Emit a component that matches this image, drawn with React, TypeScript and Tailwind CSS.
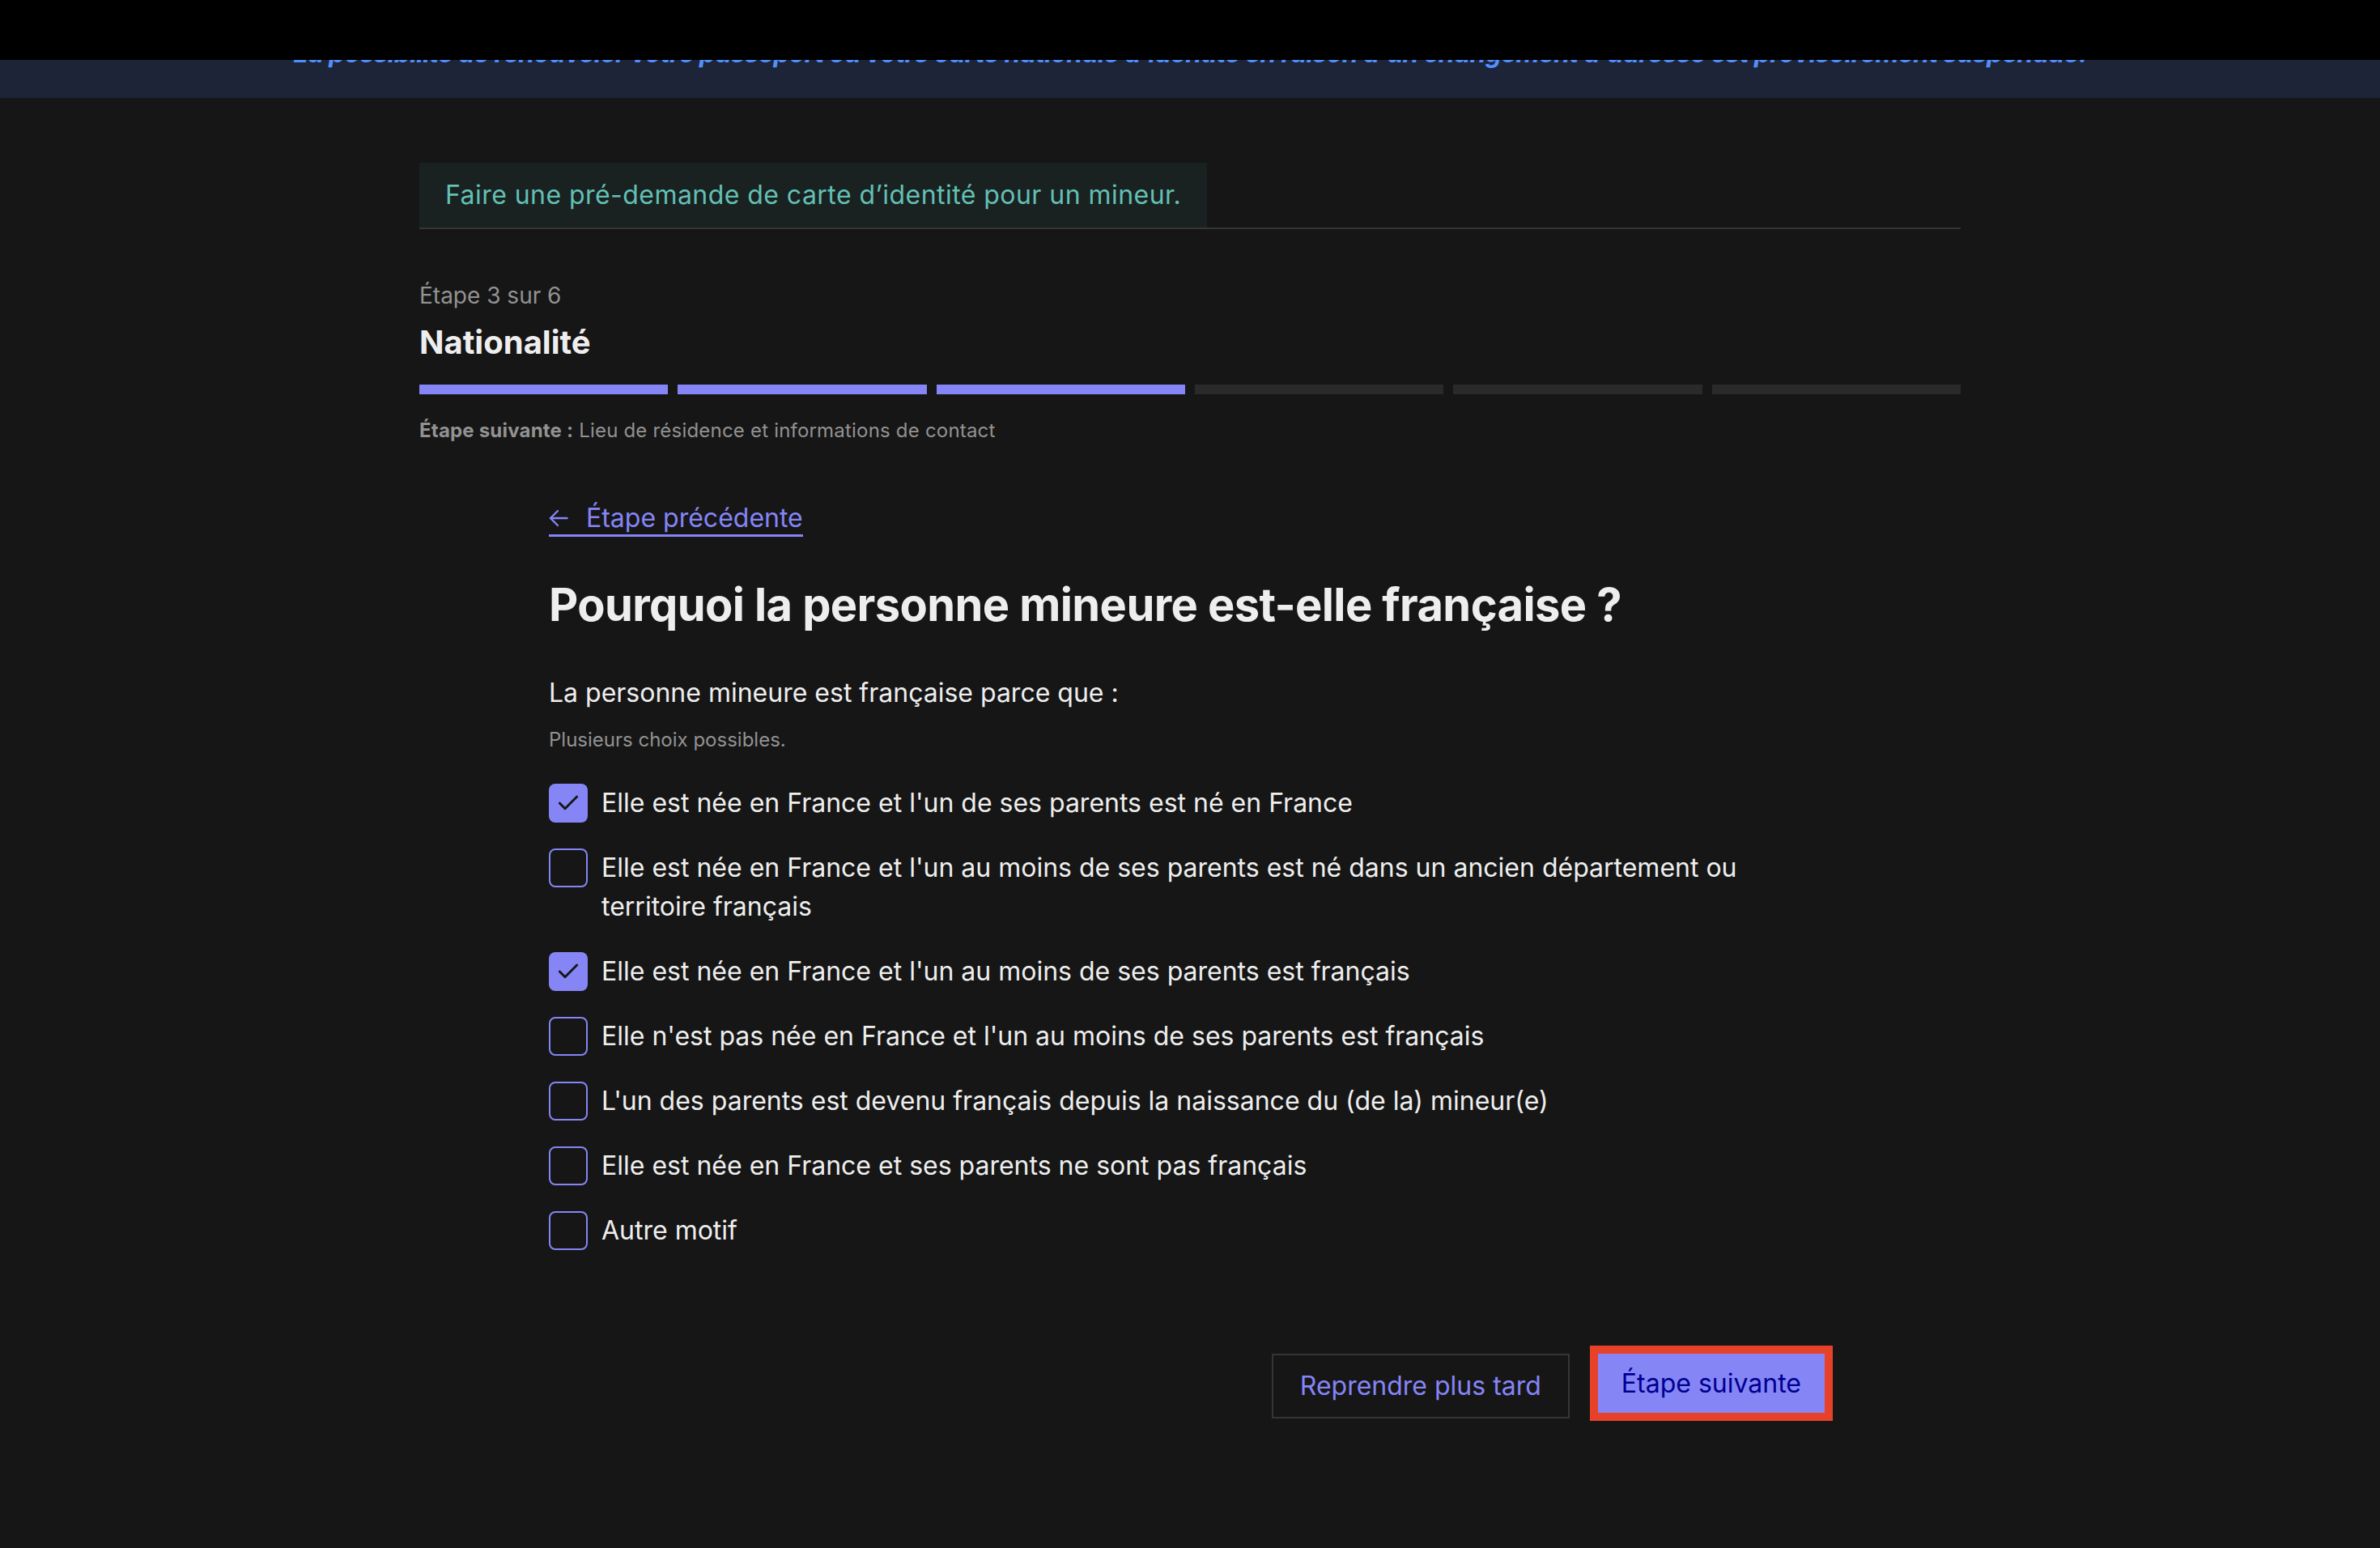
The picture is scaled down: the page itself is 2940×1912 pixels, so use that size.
import React from 'react';
import { Check } from 'lucide-react';

const FONT = 'Inter, "Noto Sans", "Liberation Sans", sans-serif';

const choices = [
  { label: "Elle est née en France et l'un de ses parents est né en France", checked: true },
  {
    label: "Elle est née en France et l'un au moins de ses parents est né dans un ancien département ou territoire français",
    checked: false,
  },
  { label: "Elle est née en France et l'un au moins de ses parents est français", checked: true },
  { label: "Elle n'est pas née en France et l'un au moins de ses parents est français", checked: false },
  { label: "L'un des parents est devenu français depuis la naissance du (de la) mineur(e)", checked: false },
  { label: 'Elle est née en France et ses parents ne sont pas français', checked: false },
  { label: 'Autre motif', checked: false },
];

function Checkbox({ label, checked }: { label: string; checked: boolean }) {
  return (
    <label className="flex items-start gap-[17px]">
      <span
        className={
          checked
            ? 'flex h-[48px] w-[48px] shrink-0 items-center justify-center rounded-[8px] bg-[#8585f6]'
            : 'flex h-[48px] w-[48px] shrink-0 items-center justify-center rounded-[8px] border-2 border-[#8585f6]'
        }
      >
        {checked && <Check size={32} strokeWidth={2.2} color="#161616" />}
      </span>
      <span className="max-w-[1430px] text-[32px] leading-[48px] text-[#eeeeee]">{label}</span>
    </label>
  );
}

export default function App() {
  return (
    <div className="relative min-h-[1912px] bg-[#161616]" style={{ fontFamily: FONT }}>
      {/* info banner, top part hidden by the black bar */}
      <div className="bg-[#1e2437] pb-[31px] pt-[42px] text-center">
        <p className="text-[32px] font-bold italic leading-[48px] tracking-[-0.7px] text-[#518fff]">
          La possibilité de renouveler votre passeport ou votre carte nationale d'identité en raison d'un changement d'adresse est provisoirement suspendue.
        </p>
      </div>
      <div className="absolute left-0 right-0 top-0 h-[74px] bg-black" />

      <main className="mx-auto w-[1904px] pt-[80px]">
        <div className="border-b-2 border-[#353535]">
          <div className="inline-block bg-[#1a2121] px-[32px] py-[16px] text-[32px] leading-[48px] tracking-[0.45px] text-[#62c0b4]">
            Faire une pré-demande de carte d’identité pour un mineur.
          </div>
        </div>

        <div className="mt-[62px]">
          <p className="text-[28px] leading-[40px] text-[#929292]">Étape 3 sur 6</p>
          <h2 className="mt-[10px] text-[40px] font-bold leading-[56px] text-[#eeeeee]">Nationalité</h2>
          <div className="mt-[24px] grid grid-cols-6 gap-[12px]">
            {[1, 2, 3, 4, 5, 6].map((i) => (
              <div key={i} className={i <= 3 ? 'h-[12px] bg-[#8585f6]' : 'h-[12px] bg-[#2a2a2a]'} />
            ))}
          </div>
          <p className="mt-[29px] text-[24px] leading-[32px] tracking-[0.2px] text-[#929292]">
            <span className="font-bold">Étape suivante :</span> Lieu de résidence et informations de contact
          </p>
        </div>

        <div className="px-[160px] pt-[72px]">
          <a className="inline-flex items-center gap-[22px] border-b-[3px] border-[#8585f6] text-[32px] leading-[40px] text-[#8585f6]">
            <svg width="24" height="24" viewBox="0 0 24 24" fill="none" stroke="currentColor" strokeWidth="2.4" strokeLinecap="round" strokeLinejoin="round">
              <path d="M22.5 12H2" />
              <path d="M11 3 2 12l9 9" />
            </svg>
            Étape précédente
          </a>

          <h1 className="mt-[48px] text-[56px] font-bold leading-[72px] tracking-[-0.6px] text-[#eeeeee]">
            Pourquoi la personne mineure est-elle française ?
          </h1>

          <fieldset className="mt-[49px]">
            <legend className="text-[32px] leading-[48px] text-[#eeeeee]">La personne mineure est française parce que :</legend>
            <p className="mt-[18px] text-[24px] leading-[32px] text-[#929292]">Plusieurs choix possibles.</p>
            <div className="mt-[38px] flex flex-col gap-[32px]">
              {choices.map((c) => (
                <Checkbox key={c.label} label={c.label} checked={c.checked} />
              ))}
            </div>
          </fieldset>

          <div className="mt-[128px] flex items-start justify-end gap-[35px] pr-[8px]">
            <button className="h-[80px] border-2 border-[#353535] px-[33px] text-[32px] text-[#8585f6]">
              Reprendre plus tard
            </button>
            <button className="h-[73px] bg-[#8585f6] px-[29px] text-[32px] text-[#000091] outline outline-[10px] outline-[#e8412a]">
              Étape suivante
            </button>
          </div>
        </div>
      </main>
    </div>
  );
}
